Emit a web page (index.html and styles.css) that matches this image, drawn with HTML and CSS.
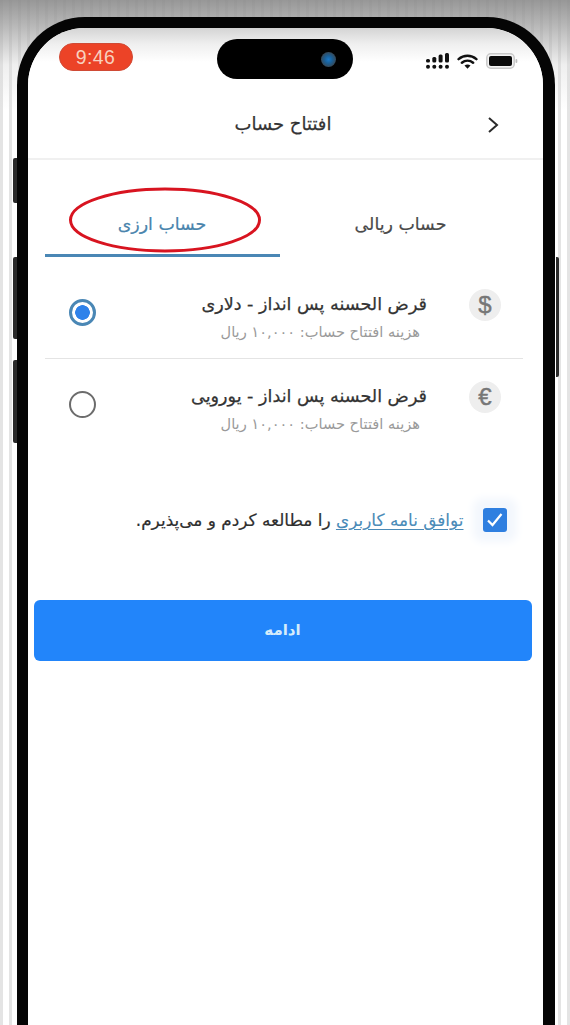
FILE: index.html
```html
<!DOCTYPE html>
<html lang="fa">
<head>
<meta charset="utf-8">
<title>افتتاح حساب</title>
<link rel="stylesheet" href="styles.css">
</head>
<body>
<div class="stage">
  <div class="phone">
    <span class="side-btn btn-a"></span>
    <span class="side-btn btn-b"></span>
    <span class="side-btn btn-c"></span>
    <span class="side-btn btn-r"></span>
    <div class="screen">
      <div class="statusbar">
        <div class="time">9:46</div>
        <div class="island"><span class="camera"></span></div>
        <div class="status-icons">
          <svg class="signal" width="23" height="16" viewBox="0 0 23 16" aria-hidden="true">
            <g fill="#111">
              <rect x="0" y="6" width="4" height="3.500" rx="1.500"/><rect x="6.300" y="4" width="4" height="5.500" rx="1.500"/><rect x="12.600" y="1.500" width="4" height="8" rx="1.500"/><rect x="19" y="0" width="4" height="9.500" rx="1.500"/>
              <circle cx="2" cy="13.800" r="2"/><circle cx="8.300" cy="13.800" r="2"/><circle cx="14.600" cy="13.800" r="2"/><circle cx="21" cy="13.800" r="2"/>
            </g>
          </svg>
          <svg class="wifi" width="21" height="15" viewBox="0 0 22 16" aria-hidden="true">
            <path d="M1.500 5.500C7 .6 15 .6 20.500 5.500M5 9.300c3.500-3 8.500-3 12 0" fill="none" stroke="#111" stroke-width="2.600" stroke-linecap="round"/>
            <path d="M7.800 12.200c2-1.300 4.400-1.300 6.400 0L11 15.800z" fill="#111"/>
          </svg>
          <svg class="battery" width="32" height="16" viewBox="0 0 32 16" aria-hidden="true">
            <rect x="0.800" y="0.800" width="27.400" height="14.400" rx="4" fill="#f4f4f4" stroke="#c9c9c9" stroke-width="1.500"/>
            <rect x="3" y="3" width="23" height="10" rx="2" fill="#0a0a0a"/>
            <rect x="29.500" y="6" width="1.800" height="4" rx=".9" fill="#bdbdbd"/>
          </svg>
        </div>
      </div>
      <header class="appbar">
        <h1 class="appbar-title">افتتاح حساب</h1>
        <svg class="back" width="12" height="18" viewBox="0 0 12 18" aria-hidden="true"><path d="M2 2l8 7-8 7" fill="none" stroke="#2b2b2b" stroke-width="2"/></svg>
      </header>
      <div class="tabs">
        <div class="tab tab-plain">حساب ریالی</div>
        <div class="tab tab-active">حساب ارزی</div>
        <svg class="highlight" width="196" height="70" viewBox="0 0 196 70" aria-hidden="true"><ellipse cx="98" cy="35" rx="94.500" ry="31" fill="none" stroke="#d81420" stroke-width="3"/></svg>
      </div>
      <div class="options">
        <div class="option">
          <span class="coin">$</span>
          <div class="option-text">
            <div class="option-title">قرض الحسنه پس انداز - دلاری</div>
            <div class="option-sub">هزینه افتتاح حساب: ۱۰,۰۰۰ ریال</div>
          </div>
          <span class="radio radio-on"></span>
        </div>
        <div class="option">
          <span class="coin">€</span>
          <div class="option-text">
            <div class="option-title">قرض الحسنه پس انداز - یورویی</div>
            <div class="option-sub">هزینه افتتاح حساب: ۱۰,۰۰۰ ریال</div>
          </div>
          <span class="radio"></span>
        </div>
      </div>
      <div class="terms">
        <span class="check">
          <svg width="18" height="16" viewBox="0 0 18 16" aria-hidden="true"><path d="M2 8.500l4.500 4.500 9-11" fill="none" stroke="#fff" stroke-width="2.200"/></svg>
        </span>
        <p class="terms-text"><a class="terms-link">توافق نامه کاربری</a> را مطالعه کردم و می‌پذیرم.</p>
      </div>
      <button class="continue" type="button">ادامه</button>
    </div>
  </div>
</div>
</body>
</html>
```
FILE: styles.css
```css
* { box-sizing: border-box; }
html, body { margin: 0; padding: 0; }
body {
  width: 570px;
  height: 1025px;
  overflow: hidden;
  font-family: "DejaVu Sans", "Noto Sans", sans-serif;
}
.stage {
  height: 1025px;
  padding: 17px 15px 0 17px;
  background:
    linear-gradient(to bottom, rgba(140,140,140,.9) 0, rgba(165,165,165,.8) 25px, rgba(215,215,215,.4) 65px, rgba(255,255,255,0) 110px),
    repeating-linear-gradient(to right, #e4e4e4 0, #e4e4e4 3px, #fff 3px, #fff 9px);
}
.phone {
  position: relative;
  height: 1008px;
  border: 11.500px solid #050505;
  border-right-width: 12.500px;
  border-bottom: 0;
  border-radius: 68px 68px 0 0;
  background: #fff;
}
.side-btn {
  position: absolute;
  width: 4px;
  background: #2a2a2a;
  border-radius: 2px 0 0 2px;
}
.btn-a { left: -15.500px; top: 130px; height: 45px; }
.btn-b { left: -15.500px; top: 229px; height: 82px; }
.btn-c { left: -15.500px; top: 332px; height: 83px; }
.btn-r { right: -15.500px; top: 229px; height: 120px; width: 3px; border-radius: 0 2px 2px 0; }
.screen {
  position: relative;
  height: 100%;
  border-radius: 57px 57px 0 0;
  overflow: hidden;
  background: linear-gradient(to bottom, #d4d4d4 0, #efefef 16px, #fff 34px);
}
.statusbar {
  position: relative;
  display: flex;
  align-items: flex-start;
  justify-content: space-between;
  height: 62px;
  padding: 15px 25px 0 30.500px;
}
.time {
  width: 74px;
  height: 28px;
  border: 1px solid #cf4a35;
  border-radius: 14px;
  background: #ec4327;
  color: #f8d0bf;
  font: 19.500px/27px "Liberation Sans", sans-serif;
  text-align: center;
  letter-spacing: .4px;
}
.island {
  position: absolute;
  left: 189px;
  top: 11px;
  width: 136px;
  height: 40px;
  border-radius: 20px;
  background: #000;
}
.camera {
  position: absolute;
  right: 17px;
  top: 13px;
  width: 15px;
  height: 15px;
  border-radius: 50%;
  background: radial-gradient(circle, #1a78c8 0, #1a5f96 35%, #3a4650 75%, #222 100%);
}
.status-icons {
  display: flex;
  align-items: center;
  gap: 8px;
  padding-top: 10px;
}
.appbar {
  position: relative;
  display: flex;
  align-items: center;
  justify-content: center;
  height: 70px;
  padding: 0 5px 1px 0;
  border-bottom: 2px solid #f0f0f0;
}
.appbar-title {
  margin: 0;
  font-size: 18px;
  font-weight: 400;
  color: #333;
  direction: rtl;
  -webkit-text-stroke: .25px #333;
}
.back { position: absolute; right: 44px; top: 26px; }
.tabs {
  position: relative;
  display: flex;
  justify-content: flex-end;
  margin: 0 0 0 16.500px;
  height: 97px;
  direction: rtl;
}
.tab {
  width: 235px;
  height: 97px;
  padding-top: 52px;
  text-align: center;
  font-size: 17.400px;
  line-height: 24px;
  color: #4a4a4a;
  -webkit-text-stroke: .2px #4a4a4a;
}
.tab-plain { padding-left: 3px; }
.tab-active {
  color: #4a85ad;
  border-bottom: 3px solid #4a87b5;
  margin-right: 2px;
  -webkit-text-stroke: .2px #4a85ad;
}
.highlight {
  position: absolute;
  left: 22.500px;
  top: 25px;
}
.options {
  margin: 0 20px 0 16.500px;
  direction: rtl;
}
.option {
  display: flex;
  align-items: flex-start;
  height: 92px;
}
.option:first-child {
  height: 102px;
  padding-top: 32px;
  border-bottom: 1px solid #e4e4e4;
}
.option + .option { padding-top: 22px; }
.coin {
  flex: none;
  width: 32px;
  height: 32px;
  margin: 0 22px 0 0;
  border-radius: 50%;
  background: #eeeeee;
  color: #777;
  font: 24px/32px "Liberation Sans", sans-serif;
  text-align: center;
  -webkit-text-stroke: .4px #777;
}
.option-text { flex: 1; margin: 3px 42px 0 0; }
.option-title {
  font-size: 17.600px;
  line-height: 24px;
  color: #333;
  -webkit-text-stroke: .25px #333;
}
.option-sub {
  margin: 6px 7px 0 0;
  font-size: 14.600px;
  line-height: 20px;
  color: #9a9a9a;
}
.radio {
  flex: none;
  width: 27px;
  height: 27px;
  margin: 10px 0 0 24px;
  border: 2.500px solid #6c6c6c;
  border-radius: 50%;
  background: #fff;
}
.radio-on {
  border: 3px solid #4a87b5;
  background: radial-gradient(circle, #2f82ea 0, #2f82ea 7px, #fff 7.600px);
}
.terms {
  display: flex;
  align-items: center;
  direction: rtl;
  gap: 19px;
  margin: 57px 36.500px 0 0;
}
.check {
  flex: none;
  display: flex;
  align-items: center;
  justify-content: center;
  width: 24px;
  height: 24px;
  border-radius: 3px;
  background: #2f7fe0;
  box-shadow: 0 0 8px 10px #f3f7fd;
}
.terms-text {
  margin: 0;
  font-size: 16.900px;
  line-height: 24px;
  color: #2e2e2e;
  -webkit-text-stroke: .2px #2e2e2e;
}
.terms-link {
  color: #4a8bb8;
  text-decoration: underline;
  text-underline-offset: 3px;
  -webkit-text-stroke: .1px #4a8bb8;
}
.continue {
  display: block;
  width: 498px;
  height: 61px;
  margin: 68px 0 0 5.500px;
  padding: 0 0 2px;
  border: 0;
  border-radius: 6px;
  background: #2285fa;
  color: #d5ecfb;
  font: 700 15px "DejaVu Sans", sans-serif;
  direction: rtl;
}
```
